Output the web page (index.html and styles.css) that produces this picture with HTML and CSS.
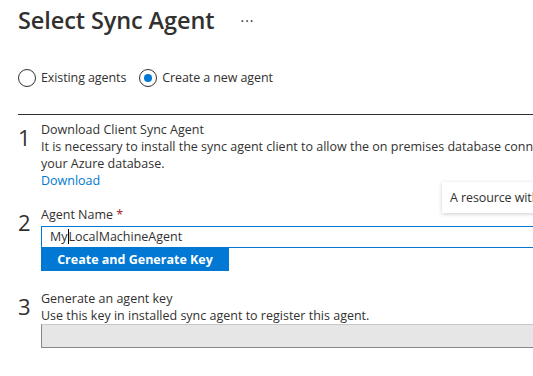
FILE: index.html
```html
<!DOCTYPE html>
<html lang="en">
<head>
    <meta charset="UTF-8">
    <title>Select Sync Agent</title>
    <link rel="stylesheet" href="styles.css">
</head>
<body>
    <div class="blade">
        <div class="blade-header">
            <h1>Select Sync Agent</h1>
            <span class="more">&middot;&middot;&middot;</span>
        </div>

        <div class="radio-row">
            <label class="radio"><span class="radio-dot"></span>Existing agents</label>
            <label class="radio checked"><span class="radio-dot"></span>Create a new agent</label>
        </div>

        <div class="divider"></div>

        <div class="step">
            <div class="step-num">1</div>
            <div class="step-body">
                <div class="step-title">Download Client Sync Agent</div>
                <p class="step-text">It is necessary to install the sync agent client to allow the on premises database connection to your Azure database.</p>
                <a class="link" href="#">Download</a>
            </div>
        </div>

        <div class="step step-2">
            <div class="step-num">2</div>
            <div class="step-body">
                <div class="step-title">Agent Name <span class="required">*</span></div>
                <div class="text-input">My<span class="caret"></span>LocalMachineAgent</div>
                <button class="primary-btn">Create and Generate Key</button>
            </div>
        </div>

        <div class="step step-3">
            <div class="step-num">3</div>
            <div class="step-body">
                <div class="step-title">Generate an agent key</div>
                <p class="step-text">Use this key in installed sync agent to register this agent.</p>
                <div class="key-box"></div>
            </div>
        </div>

        <div class="tooltip">A resource with this name already exists</div>
    </div>
</body>
</html>
```

FILE: styles.css
```css
* {
    margin: 0;
    padding: 0;
    box-sizing: border-box;
}

html, body {
    overflow: hidden;
    background: #fff;
}

body {
    font-family: 'Open Sans', sans-serif;
    font-size: 12.5px;
    color: #323130;
}

.blade {
    position: relative;
    width: 660px;
    padding: 0 0 0 18px;
}

/* Header */
.blade-header {
    display: flex;
    align-items: center;
    height: 38px;
    padding-top: 2px;
}

.blade-header h1 {
    font-size: 23.5px;
    font-weight: 600;
    letter-spacing: -0.1px;
}

.more {
    margin-left: 26px;
    font-size: 14px;
    letter-spacing: 1px;
}

/* Radios */
.radio-row {
    display: flex;
    gap: 13px;
    margin-top: 30px;
}

.radio {
    display: flex;
    align-items: center;
    gap: 5px;
    line-height: 20px;
    letter-spacing: -0.1px;
}

.radio-dot {
    width: 18px;
    height: 18px;
    border: 1px solid #323130;
    border-radius: 50%;
    display: flex;
    align-items: center;
    justify-content: center;
}

.radio.checked .radio-dot::after {
    content: '';
    width: 8px;
    height: 8px;
    border-radius: 50%;
    background: #0078d4;
}

.divider {
    margin-top: 26px;
    border-top: 1px solid #323130;
}

/* Steps */
.step {
    display: flex;
    gap: 13px;
    margin-top: 6px;
    line-height: 17px;
}

.step-num {
    font-size: 22px;
    font-weight: 400;
    line-height: 22px;
    margin-top: 5px;
    width: 10px;
}

.step-body {
    flex: 1;
}

.step-text {
    width: 555px;
}

.link {
    color: #0078d4;
    text-decoration: none;
}

.step-2 {
    margin-top: 17px;
}

.required {
    color: #a4262c;
}

.text-input {
    margin-top: 3px;
    height: 22px;
    border: 1px solid #0078d4;
    padding: 0 8px;
    line-height: 20px;
}

.caret {
    display: inline-block;
    width: 1px;
    height: 15px;
    background: #000;
    vertical-align: -3px;
}

.primary-btn {
    display: block;
    width: 188px;
    height: 23px;
    background: #0078d4;
    color: #fff;
    border: none;
    font-family: inherit;
    font-size: 12.5px;
    font-weight: 700;
}

.step-3 {
    margin-top: 19px;
}

.key-box {
    height: 24px;
    background: #e6e6e6;
    border: 1px solid #c8c8c8;
    border-left-color: #8a8886;
    border-bottom-color: #8a8886;
}

/* Tooltip */
.tooltip {
    position: absolute;
    left: 442px;
    top: 182px;
    width: 220px;
    height: 31px;
    padding: 7px 8px;
    background: #fff;
    box-shadow: 0 1px 4px rgba(0,0,0,0.2);
    white-space: nowrap;
    overflow: hidden;
    letter-spacing: -0.1px;
}
```
